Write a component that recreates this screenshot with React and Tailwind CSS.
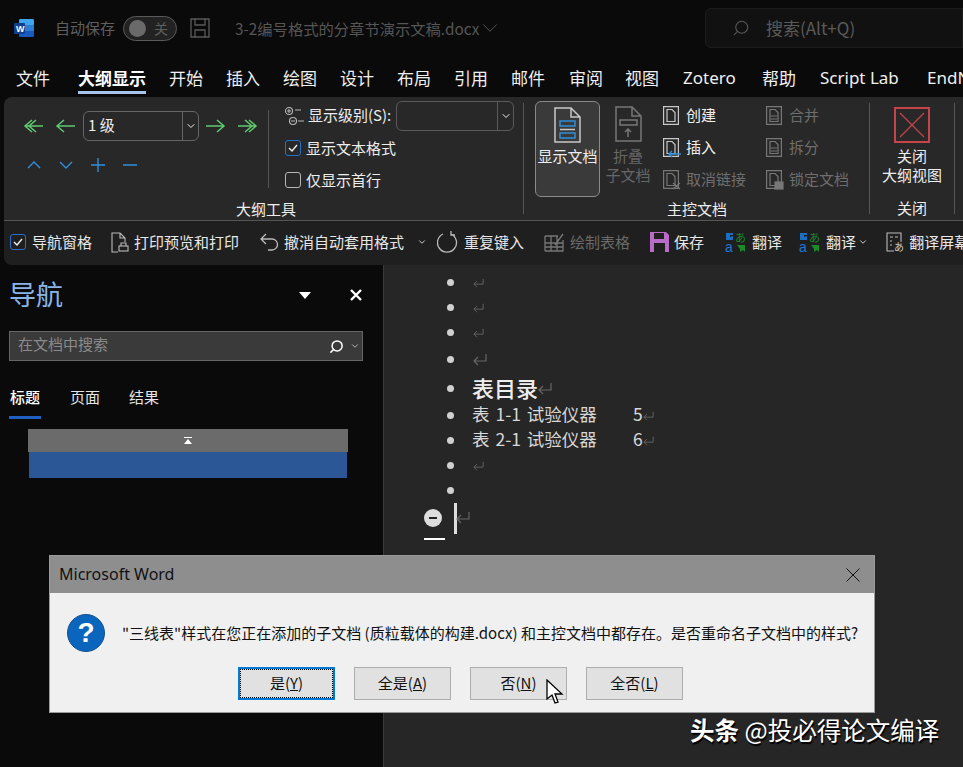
import React from "react";
import { ChevronDown, Search } from "lucide-react";

const cjk = "font-['Noto_Sans_CJK_SC','Noto_Sans',sans-serif]";

const tabs = [
  ["文件", "w-[78px] pl-4"],
  ["大纲显示", "w-[91px]"],
  ["开始", "w-[57px]"],
  ["插入", "w-[57px]"],
  ["绘图", "w-[57px]"],
  ["设计", "w-[57px]"],
  ["布局", "w-[57px]"],
  ["引用", "w-[57px]"],
  ["邮件", "w-[58px]"],
  ["审阅", "w-[56px]"],
  ["视图", "w-[58px]"],
  ["Zotero", "w-[79px]"],
  ["帮助", "w-[58px]"],
  ["Script Lab", "w-[107px]"],
  ["EndNote", "w-[70px]"],
];

function Arrow({ dir = "right", double = false }) {
  return (
    <svg width="21" height="16" viewBox="0 0 21 16" fill="none" stroke="#5fc96f" strokeWidth="1.5" className={dir === "left" ? "-scale-x-100" : ""}>
      <path d="M1 8h18M12 2l7 6-7 6" />
      {double && <path d="M8 2l7 6-7 6" />}
    </svg>
  );
}

function Check({ on, className = "" }) {
  return (
    <span className={`flex h-4 w-4 items-center justify-center rounded-[3px] border ${on ? "border-[#2a6fc9]" : "border-[#b5b5b5]"} ${className}`}>
      {on && (
        <svg width="10" height="8" viewBox="0 0 10 8" fill="none" stroke="#eee" strokeWidth="1.4">
          <path d="M1 4l3 3 5-6" />
        </svg>
      )}
    </span>
  );
}

function DocIcon({ dim, badge }) {
  const c = dim ? "#777" : "#c8c8c8";
  return (
    <svg width="16" height="19" viewBox="0 0 16 19" fill="none" stroke={c} strokeWidth="1.2" className="overflow-visible">
      <path d="M.6.6h14.800v17.800H.6z" />
      <path d="M4 3.500h5l3 3v9H4z" />
      {badge === "in" && <path d="M18 16H6M9 13l-3 3 3 3" stroke="#2f8fdc" strokeWidth="1.4" />}
      {badge === "x" && <path d="M10 13l7 6M17 13l-7 6" />}
      {badge === "lock" && <rect x="9" y="12" width="8" height="7" fill={c} />}
      {badge === "bar" && <path d="M5 10h6M5 13h6" />}
    </svg>
  );
}

function SmallCmd({ label, dim, badge }) {
  return (
    <div className={`flex h-8 items-center gap-[7px] ${dim ? "text-[#6e6e6e]" : "text-[#f2f2f2]"}`}>
      <DocIcon dim={dim} badge={badge} />
      <span>{label}</span>
    </div>
  );
}

function Sep({ className = "" }) {
  return <div className={`w-px shrink-0 bg-[#555] ${className}`} />;
}

function Ret({ big, className = "" }) {
  return (
    <svg width={big ? 14 : 11} height={big ? 13 : 10} viewBox="0 0 14 13" fill="none" stroke="#666" strokeWidth="1.2" className={`inline-block shrink-0 ${className}`}>
      <path d="M13 1v7H1M5 4L1 8l4 4" />
    </svg>
  );
}

function Row({ h, children }) {
  return (
    <div className={`flex items-center ${h}`}>
      <span className="ml-[63px] mr-[19px] h-[7px] w-[7px] rounded-full bg-[#d0d0d0]" />
      {children}
    </div>
  );
}

function TranslateIcon() {
  return (
    <svg width="22" height="21" viewBox="0 0 22 21">
      <path d="M1 1h7v2H5v2l3-1v4H1z" fill="#1c6fc0" />
      <text x="0" y="20" fontSize="14" fill="#1c78d0" fontFamily="Liberation Sans">a</text>
      <text x="10" y="10" fontSize="11" fill="#1a8a2a" fontFamily="Noto Sans CJK JP">あ</text>
      <path d="M12 13h8v7l-2-2-3 2v-3z" fill="#1a8a2a" />
    </svg>
  );
}

function QatItem({ icon, label, dim, className = "" }) {
  return (
    <div className={`flex shrink-0 items-center gap-[5px] ${dim ? "text-[#6a6a6a]" : "text-[#e8e8e8]"} ${className}`}>
      {icon}
      <span>{label}</span>
    </div>
  );
}

function DlgButton({ children, focus }) {
  return (
    <button className={`flex h-[33px] w-[97px] items-center justify-center bg-[#e1e1e1] text-[15px] text-[#111] ${focus ? "border-2 border-[#0078d7] outline-1 -outline-offset-3 outline-dotted outline-black" : "border border-[#adadad]"}`}>
      {children}
    </button>
  );
}

export default function App() {
  return (
    <div className={`relative h-[767px] w-[963px] overflow-hidden bg-[#0a0a0a] ${cjk}`}>
      {/* title bar */}
      <div className="flex h-[60px] items-center pb-1 text-[15px] text-[#5f5f5f]">
        <svg width="20" height="20" viewBox="0 0 20 20" className="ml-[14px] shrink-0">
          <rect x="5" y="1" width="15" height="18" rx="1.500" fill="#185abd" />
          <rect x="5" y="1" width="15" height="6" rx="1.500" fill="#41a5ee" />
          <rect x="5" y="7" width="15" height="6" fill="#2b7cd3" />
          <rect x="0" y="5" width="11" height="11" rx="1" fill="#103f91" />
          <text x="2" y="14" fontSize="9" fontWeight="700" fill="#fff" fontFamily="Liberation Sans">W</text>
        </svg>
        <span className="ml-[21px] whitespace-nowrap">自动保存</span>
        <div className="ml-2 flex h-[25px] w-[54px] shrink-0 items-center justify-between rounded-full border border-[#5a5a5a] bg-[#222] px-[5px] pr-2">
          <span className="h-[17px] w-[17px] rounded-full bg-[#6a6a6a]" />
          <span className="text-[14px]">关</span>
        </div>
        <svg width="20" height="20" viewBox="0 0 20 20" fill="none" stroke="#5a5a5a" strokeWidth="1.300" className="ml-[13px] shrink-0">
          <path d="M1 1h18v18H1zM5 1v6h10V1M5 19v-7h10v7" />
        </svg>
        <span className="ml-[25px] w-[245px] whitespace-nowrap text-[15.3px] text-[#565656]">3-2编号格式的分章节演示文稿.docx</span>
        <ChevronDown className="-ml-[3px] h-[26px] w-[26px] shrink-0" strokeWidth={0.8} />
        <div className="ml-[202px] flex h-[40px] flex-1 items-center rounded-l-md border border-[#1c1c1c] bg-[#111] pl-[26px] text-[17px] text-[#5a5a5a]">
          <Search className="-scale-x-100 h-[18px] w-[18px]" strokeWidth={1.4} />
          <span className="ml-[16px] whitespace-nowrap">搜索(Alt+Q)</span>
        </div>
      </div>

      {/* tabs */}
      <div className="flex h-[37px] items-start whitespace-nowrap pt-[5px] text-[17px] text-[#f0f0f0]">
        {tabs.map(([t, w], i) => (
          <div key={t} className={`shrink-0 ${w} ${t === "Zotero" || t === "Script Lab" || t === "EndNote" ? "font-['Noto_Sans',sans-serif]" : ""}`}>
            {i === 1 ? (
              <span className="inline-block border-b-[3px] border-[#a9c4ea] font-bold text-white">{t}</span>
            ) : (
              <span>{t}</span>
            )}
          </div>
        ))}
      </div>

      {/* ribbon */}
      <div className="ml-1 flex h-[168px] flex-col overflow-hidden rounded-l-lg bg-[#282828] text-[15px] text-[#eee]">
        <div className="flex h-[124px] border-b border-[#555]">
          {/* outline tools */}
          <div className="flex w-[519px] shrink-0 flex-col">
            <div className="flex h-[103px] pt-[2px]">
              <div className="w-[264px] pl-[19px] pt-[12px]">
                <div className="flex items-center">
                  <Arrow dir="left" double />
                  <span className="ml-[11px]"><Arrow dir="left" /></span>
                  <div className="ml-[7px] flex h-[30px] w-[116px] items-center rounded-md border border-[#666]">
                    <span className="flex-1 pb-px pl-1">1 级</span>
                    <span className="flex h-full w-4 items-center justify-center border-l border-[#666]">
                      <ChevronDown className="h-3 w-3" />
                    </span>
                  </div>
                  <span className="ml-[6px]"><Arrow /></span>
                  <span className="ml-[11px]"><Arrow double /></span>
                </div>
                <div className="ml-[4px] mt-[17px] flex items-center gap-[18px] text-[#2f8fdc]">
                  <svg width="14" height="8" viewBox="0 0 14 8" fill="none" stroke="currentColor" strokeWidth="1.400"><path d="M1 7l6-6 6 6" /></svg>
                  <svg width="14" height="8" viewBox="0 0 14 8" fill="none" stroke="currentColor" strokeWidth="1.400"><path d="M1 1l6 6 6-6" /></svg>
                  <svg width="14" height="14" viewBox="0 0 14 14" fill="none" stroke="currentColor" strokeWidth="1.400"><path d="M0 7h14M7 0v14" /></svg>
                  <svg width="14" height="14" viewBox="0 0 14 14" fill="none" stroke="currentColor" strokeWidth="1.400"><path d="M0 7h14" /></svg>
                </div>
              </div>
              <Sep className="mt-[11px] h-[78px]" />
              <div className="ml-[15px] mt-[2px] flex-1 whitespace-nowrap">
                <div className="flex h-[30px] items-center">
                  <svg width="21" height="20" viewBox="0 0 21 20" fill="none" stroke="#b8b8b8" strokeWidth="1.100">
                    <circle cx="5" cy="5" r="3.500" />
                    <path d="M3 5h4M5 3v4M11 4h6" />
                    <circle cx="9" cy="15" r="3.500" />
                    <path d="M7 15h4M14 15h6" />
                  </svg>
                  <span className="ml-[3px] pb-px">显示级别(S):</span>
                  <div className="ml-[5px] flex h-[30px] w-[118px] justify-end rounded-md border border-[#5a5a5a]">
                    <span className="flex w-4 items-center justify-center border-l border-[#5a5a5a]">
                      <ChevronDown className="h-3 w-3" />
                    </span>
                  </div>
                </div>
                <div className="ml-px mt-[1px] flex h-8 items-center gap-[5px]"><Check on />显示文本格式</div>
                <div className="ml-px flex h-8 items-center gap-[5px]"><Check />仅显示首行</div>
              </div>
            </div>
            <div className="pl-[232px] leading-[18px]">大纲工具</div>
          </div>
          <Sep className="mt-[6px] h-[111px]" />

          {/* master document */}
          <div className="flex w-[345px] shrink-0 flex-col pl-[11px] pt-1">
            <div className="flex h-[96px]">
              <div className="flex h-[96px] w-[65px] shrink-0 flex-col items-center rounded-md border border-[#8a8a8a] bg-[#3a3a3a] pt-[5px] leading-[20px]">
                <svg width="27" height="36" viewBox="0 0 27 36" fill="none" stroke="#c8c8c8" strokeWidth="1.500">
                  <path d="M1 1h16l9 9v25H1zM17 1v9h9" />
                  <rect x="6" y="14" width="15" height="5" stroke="#2f8fdc" />
                  <rect x="6" y="26" width="15" height="5" stroke="#2f8fdc" />
                  <path d="M6 22.500h15" />
                </svg>
                <span className="mt-[3px] whitespace-nowrap">显示文档</span>
              </div>
              <div className="flex w-[56px] shrink-0 flex-col items-center pt-[5px] leading-[19px] text-[#666]">
                <svg width="27" height="36" viewBox="0 0 27 36" fill="none" stroke="#777" strokeWidth="1.500">
                  <path d="M1 1h16l9 9v25H1zM17 1v9h9" />
                  <rect x="5" y="14" width="17" height="5" />
                  <path d="M13 31v-8M10 26l3-3 3 3" />
                </svg>
                <span className="mt-[4px]">折叠</span>
                <span className="whitespace-nowrap">子文档</span>
              </div>
              <div className="-mt-[2px] ml-[7px] w-[103px] shrink-0 whitespace-nowrap">
                <SmallCmd label="创建" />
                <SmallCmd label="插入" badge="in" />
                <SmallCmd label="取消链接" dim badge="x" />
              </div>
              <div className="-mt-[2px] whitespace-nowrap">
                <SmallCmd label="合并" dim badge="bar" />
                <SmallCmd label="拆分" dim badge="bar" />
                <SmallCmd label="锁定文档" dim badge="lock" />
              </div>
            </div>
            <div className="pl-[132px] pt-[3px] leading-[18px]">主控文档</div>
          </div>
          <Sep className="mt-[6px] h-[111px]" />

          {/* close */}
          <div className="flex w-[84px] shrink-0 flex-col items-center pt-[10px] leading-[19px]">
            <svg width="36" height="36" viewBox="0 0 36 36" fill="none" stroke="#c8444a" strokeWidth="1.200">
              <path d="M1 1h34v34H1z" strokeWidth="2" />
              <path d="M6 6l24 24M30 6L6 30" />
            </svg>
            <span className="mt-[3px]">关闭</span>
            <span className="whitespace-nowrap">大纲视图</span>
            <span className="mt-[14px]">关闭</span>
          </div>
          <Sep className="mt-[6px] h-[111px]" />
        </div>

        {/* quick access */}
        <div className="flex flex-1 items-center whitespace-nowrap bg-[#1f1f1f] pb-[2px] pl-[6px]">
          <QatItem icon={<Check on className="mr-px" />} label="导航窗格" />
          <QatItem
            className="ml-[19px]"
            icon={
              <svg width="18" height="21" viewBox="0 0 18 21" fill="none" stroke="#bbb" strokeWidth="1.100">
                <path d="M7 20H1V1h8l5 5v4M9 1v5h5" />
                <rect x="8" y="14" width="9" height="5" />
                <path d="M10 14v-3h5v3" />
              </svg>
            }
            label="打印预览和打印"
          />
          <QatItem
            className="ml-[20px]"
            icon={
              <svg width="20" height="20" viewBox="0 0 20 20" fill="none" stroke="#bbb" strokeWidth="1.300">
                <path d="M2 7h11a5.500 5.500 0 0 1 0 11H9M7 2L2 7l5 5" />
              </svg>
            }
            label="撤消自动套用格式"
          />
          <ChevronDown className="ml-[13px] h-[10px] w-[10px] shrink-0" />
          <QatItem
            className="ml-[10px]"
            icon={
              <svg width="22" height="22" viewBox="0 0 22 22" fill="none" stroke="#bbb" strokeWidth="1.300">
                <path d="M6 3a9.500 9.500 0 1 0 8 0M14 0v4h4" />
              </svg>
            }
            label="重复键入"
          />
          <QatItem
            dim
            className="ml-[20px]"
            icon={
              <svg width="21" height="20" viewBox="0 0 21 20" fill="none" stroke="#777" strokeWidth="1.300">
                <path d="M1 4h13M1 19V4M1 19h18V8M1 11h18M1 15h18M7 4v15M13 4v15M11 13l8-11" />
              </svg>
            }
            label="绘制表格"
          />
          <QatItem
            className="ml-[20px]"
            icon={
              <svg width="19" height="20" viewBox="0 0 19 20" fill="#b86cc8">
                <path d="M0 0h16l3 3v17H0z" />
                <rect x="4" y="1" width="10" height="6" fill="#1f1f1f" />
                <rect x="4" y="11" width="11" height="9" fill="#1f1f1f" />
              </svg>
            }
            label="保存"
          />
          <QatItem className="ml-[21px]" icon={<TranslateIcon />} label="翻译" />
          <QatItem className="ml-[17px]" icon={<TranslateIcon />} label="翻译" />
          <ChevronDown className="ml-[2px] h-[10px] w-[10px] shrink-0" />
          <QatItem
            className="ml-[18px]"
            icon={
              <svg width="18" height="20" viewBox="0 0 18 20" fill="none" stroke="#bbb" strokeWidth="1.100">
                <path d="M8 19H1V1h14v9M4 5h3M4 9h2M4 13h2M9 5h3" stroke="#bbb" />
                <text x="8" y="19" fontSize="10" fill="#ccc" stroke="none" fontFamily="Noto Sans CJK JP">あ</text>
              </svg>
            }
            label="翻译屏幕"
          />
        </div>
      </div>

      {/* body */}
      <div className="flex h-[502px]">
        {/* nav pane */}
        <div className="w-[384px] shrink-0 border-r border-[#3a3a3a] bg-[#0a0a0a] pl-[9px]">
          <div className="flex h-[66px] items-center pb-[6px]">
            <span className="pb-[2px] text-[27px] text-[#8ab4e8]">导航</span>
            <span className="ml-[236px] h-0 w-0 border-x-[6px] border-t-[7px] border-x-transparent border-t-white" />
            <svg width="12" height="12" viewBox="0 0 12 12" fill="none" stroke="#fff" strokeWidth="2.400" className="ml-[39px]">
              <path d="M1 1l10 10M11 1L1 11" />
            </svg>
          </div>
          <div className="flex h-[30px] w-[354px] items-center border border-[#666] bg-[#3a3a3a] pl-2 pr-[2px] text-[15px] text-[#8a8a8a]">
            <span className="flex-1 pb-[3px]">在文档中搜索</span>
            <Search className="-scale-x-100 h-[15px] w-[15px] text-white" strokeWidth={2.4} />
            <ChevronDown className="ml-[6px] h-[10px] w-[10px] text-[#ccc]" />
          </div>
          <div className="mt-[25px] flex h-[33px] gap-[29px] text-[15px] text-[#e5e5e5]">
            <span className="h-[33px] w-[32px] whitespace-nowrap border-b-[3px] border-[#1f5fc0] pl-px font-medium text-white">标题</span>
            <span>页面</span>
            <span>结果</span>
          </div>
          <div className="ml-[19px] mt-[10px] flex h-[23px] w-[320px] items-center justify-center bg-[#6b6b6b]">
            <svg width="8" height="7" viewBox="0 0 8 7" fill="#fff"><path d="M0 0h8v1H0zM4 2l4 5H0z" /></svg>
          </div>
          <div className="ml-[20px] h-[26px] w-[318px] bg-[#2b5797]" />
        </div>

        {/* document */}
        <div className="flex-1 bg-[#262626] pt-[5px] text-[#d8d8d8]">
          <Row h="h-[25px]"><Ret /></Row>
          <Row h="h-[25px]"><Ret /></Row>
          <Row h="h-[25px]"><Ret /></Row>
          <Row h="h-[29px]"><Ret big /></Row>
          <Row h="h-[29px]"><span className="-ml-px pb-[4px] text-[22px] font-medium leading-none text-[#eee]">表目录</span><Ret big /></Row>
          <Row h="h-[25px]"><span className="-ml-px w-[161px] whitespace-nowrap pb-[3px] text-[17.5px] [word-spacing:2px]">表 1-1 试验仪器</span><span className="pb-[3px] text-[17.5px]">5</span><Ret /></Row>
          <Row h="h-[25px]"><span className="-ml-px w-[161px] whitespace-nowrap pb-[3px] text-[17.5px] [word-spacing:2px]">表 2-1 试验仪器</span><span className="pb-[3px] text-[17.5px]">6</span><Ret /></Row>
          <Row h="h-[25px]"><Ret /></Row>
          <Row h="h-[25px]" />
          <div className="flex items-start pl-[40px]">
            <div className="flex h-[37px] w-[21px] flex-col items-start border-b-2 border-white pt-[6px]">
              <span className="flex h-[18px] w-[18px] items-center justify-center rounded-full bg-[#ddd]">
                <span className="h-[2px] w-2 bg-[#222]" />
              </span>
            </div>
            <span className="ml-[9px] h-[31px] w-[3px] bg-[#ddd]" />
            <Ret big className="-ml-[1px] mt-[8px]" />
          </div>
        </div>
      </div>

      {/* dialog */}
      <div className="absolute left-[49px] top-[555px] w-[826px] border border-[#9a9a9a] bg-[#f0f0f0]">
        <div className="flex h-[37px] items-center justify-between bg-[#8e8e8f] pl-[9px] pr-[14px] font-['Noto_Sans',sans-serif] text-[16px] text-[#111]">
          <span className="pb-px">Microsoft Word</span>
          <svg width="14" height="14" viewBox="0 0 14 14" fill="none" stroke="#111" strokeWidth="1">
            <path d="M.5.5l13 13M13.500.5l-13 13" />
          </svg>
        </div>
        <div className="flex h-[74px] items-center pl-[17px] pt-[6px]">
          <span className="flex h-[38px] w-[38px] items-center justify-center rounded-full border border-[#134f8e] bg-[#0a66bd] font-['Liberation_Sans',sans-serif] text-[28px] font-bold text-white">?</span>
          <span className="ml-[17px] whitespace-nowrap text-[15px] text-[#111]">"三线表"样式在您正在添加的子文档 (质粒载体的构建.docx) 和主控文档中都存在。是否重命名子文档中的样式?</span>
        </div>
        <div className="-ml-px flex h-[45px] gap-[19px] pl-[189px]">
          <DlgButton focus>是(<u>Y</u>)</DlgButton>
          <DlgButton>全是(<u>A</u>)</DlgButton>
          <DlgButton>否(<u>N</u>)</DlgButton>
          <DlgButton>全否(<u>L</u>)</DlgButton>
        </div>
      </div>

      {/* mouse cursor */}
      <svg width="18" height="26" viewBox="0 0 18 26" className="absolute left-[546px] top-[679px]">
        <path d="M1 1v19l5-4 3 8 3-1-3-8h7z" fill="#fff" stroke="#000" strokeWidth="1.300" />
      </svg>

      {/* watermark */}
      <div className="absolute left-[690px] top-[714px] whitespace-nowrap text-[24.5px] leading-[32px] text-white [text-shadow:1px_2px_1px_#000]">
        <span className="font-bold">头条</span> <span>@投必得论文编译</span>
      </div>
    </div>
  );
}
